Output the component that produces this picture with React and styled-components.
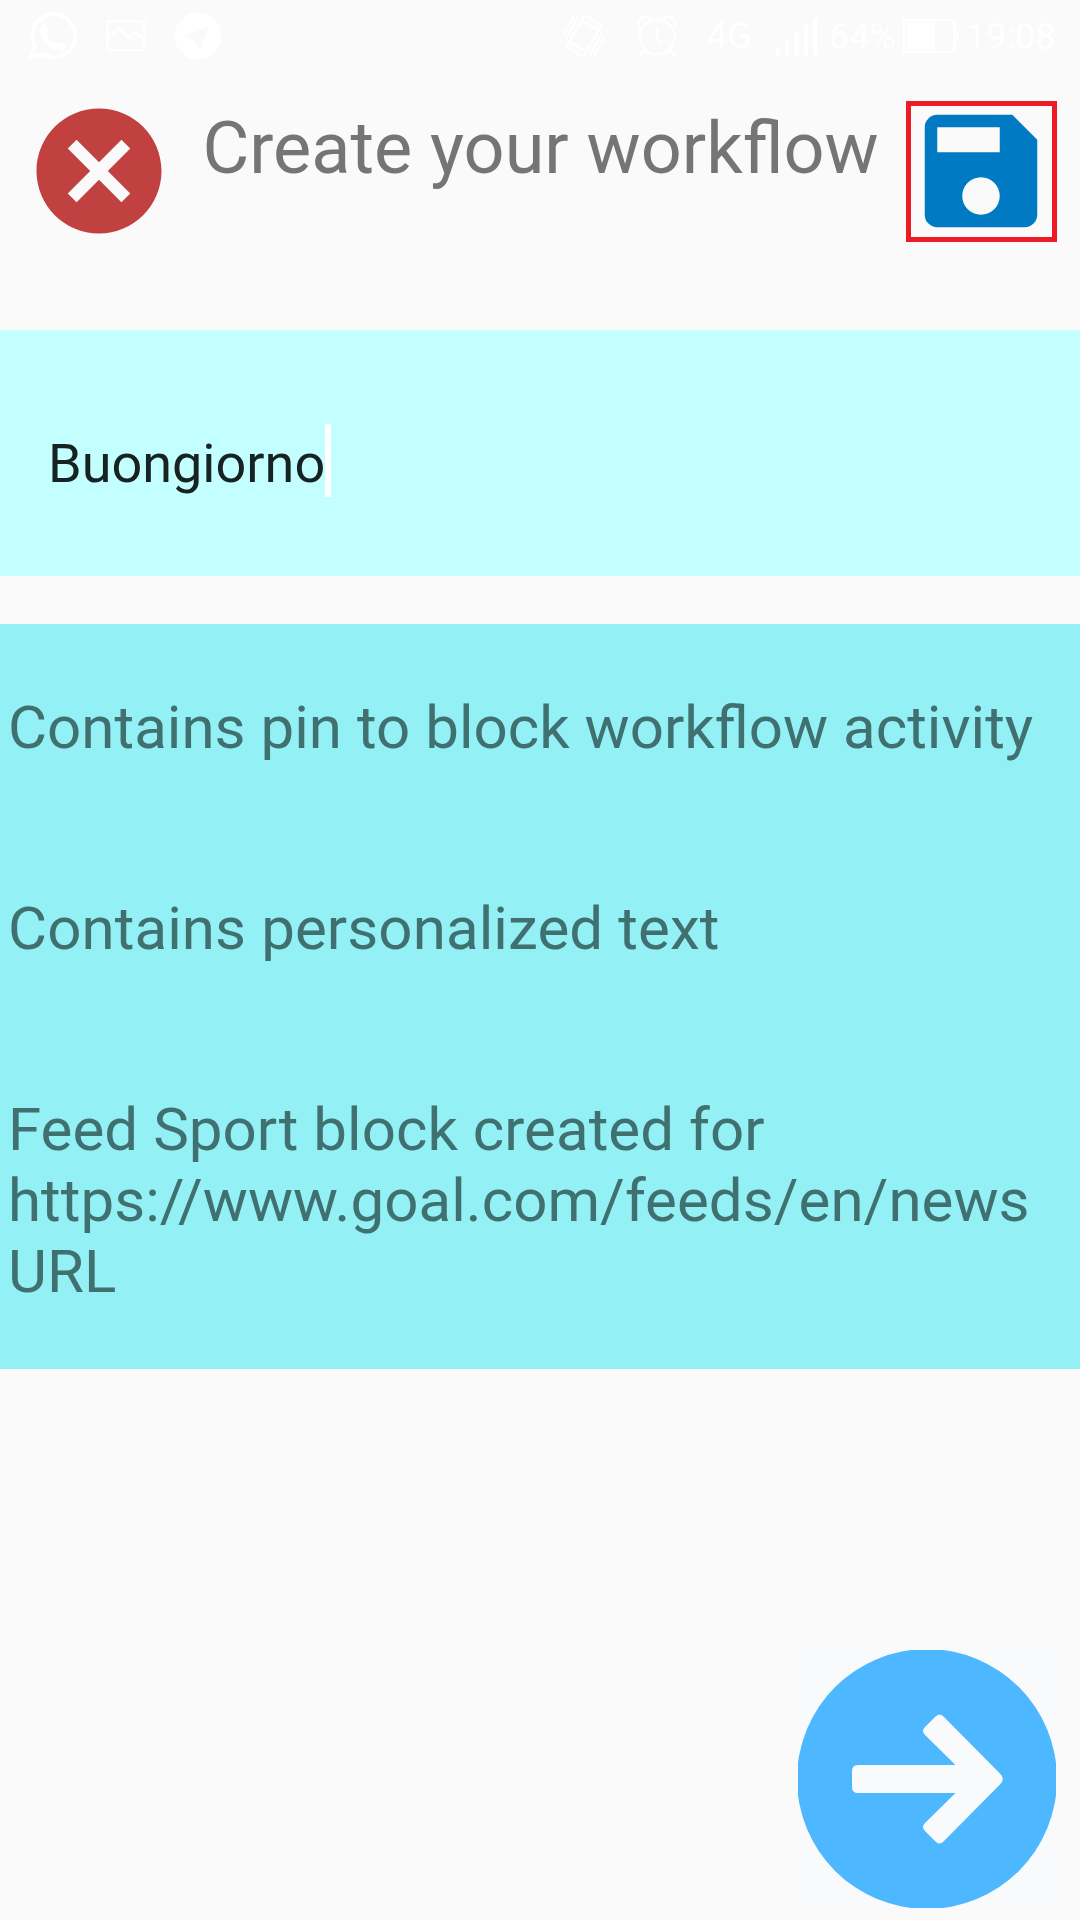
import React from "react";
import styled, { createGlobalStyle } from "styled-components";
import { MdCancel, MdSave } from "react-icons/md";

const GlobalStyle = createGlobalStyle`
  * { box-sizing: border-box; }
  body { margin: 0; background: #fafafa; }
`;

const Screen = styled.div`
  width: 1080px;
  height: 1920px;
  display: flex;
  flex-direction: column;
  overflow: hidden;
  background: #fafafa;
  font-family: Roboto, "Noto Sans", sans-serif;
`;

const StatusBar = styled.div`
  height: 72px;
  padding: 0 25px 0 28px;
  display: flex;
  justify-content: space-between;
  color: #fff;
`;

const StatusGroup = styled.div`
  display: flex;
  align-items: center;
`;

const StatusIcon = styled.svg`
  display: block;
  flex: none;
  margin-right: ${(p) => p.$gap || 0}px;
`;

const StatusText = styled.span`
  width: ${(p) => p.$width}px;
  font-size: ${(p) => p.$size}px;
  line-height: 72px;
  padding-top: ${(p) => p.$drop || 0}px;
  margin-right: ${(p) => p.$gap || 0}px;
  white-space: nowrap;
`;

const Header = styled.header`
  height: 258px;
  padding: 24px 23px 0 24px;
  display: flex;
  align-items: flex-start;
`;

const IconButton = styled.button`
  width: 150px;
  height: 150px;
  padding: 0;
  border: 0;
  background: none;
  flex: none;
  color: ${(p) => p.$color};
  svg { display: block; width: 150px; height: 150px; }
`;

const SaveFrame = styled.div`
  width: 151px;
  height: 141px;
  margin-top: 5px;
  padding: 0 1px 1px 0;
  border: 5px solid #ed1c24;
  display: flex;
  align-items: center;
  justify-content: center;
  flex: none;
`;

const Title = styled.h1`
  flex: 1;
  margin: 0;
  padding: 11px 0 0 28.5px;
  font-size: 72px;
  font-weight: 400;
  line-height: 84px;
  color: #757575;
  white-space: nowrap;
`;

const NameField = styled.div`
  height: 246px;
  padding: 94px 48px 0;
  display: flex;
  align-items: flex-start;
  background: #c4ffff;
`;

const NameText = styled.span`
  font-size: 54px;
  line-height: 80px;
  color: #172222;
`;

const Caret = styled.span`
  width: 6px;
  height: 73px;
  background: #fff;
`;

const BlockList = styled.ul`
  list-style: none;
  margin: 48px 0 0;
  height: 745px;
  padding: 68px 8px 0 8px;
  display: flex;
  flex-direction: column;
  gap: 130px;
  background: #93f0f4;
`;

const BlockItem = styled.li`
  font-size: 60px;
  line-height: 71px;
  letter-spacing: ${(p) => p.$tracking}px;
  font-feature-settings: "liga" 1;
  color: #407070;
`;

const Footer = styled.footer`
  flex: 1;
  padding: 0 24px 12px;
  display: flex;
  align-items: flex-end;
  justify-content: flex-end;
`;

const NextButton = styled.button`
  width: 258px;
  height: 258px;
  padding: 0;
  border: 0;
  background: #f9fafb;
  svg { display: block; }
`;

const blocks = [
  { text: "Contains pin to block workflow activity", tracking: 0.03 },
  { text: "Contains personalized text", tracking: 0.1 },
  { text: "Feed Sport block created for https://www.goal.com/feeds/en/news URL", tracking: 0.05 },
];

function WhatsAppIcon() {
  return (
    <StatusIcon $gap={28} width="50" height="50" viewBox="0 0 50 50">
      <path d="M3.5 46.5 7 35A21.5 21.5 0 1 1 15 43.2Z" fill="none" stroke="#fff" strokeWidth="4" />
      <path d="M14 14c2-2 4-2 5 0l2 5c.5 2-2 3-2 5 2 4 5 7 9 9 2 0 3-3 5-2l4 2c2 1 1 4-1 6-3 2-8 1-13-2-5-4-9-9-11-14-1-4 0-7 2-9Z" fill="#fff" />
    </StatusIcon>
  );
}

function PictureIcon() {
  return (
    <StatusIcon $gap={28} width="40" height="32" viewBox="0 0 40 32">
      <rect x="1.5" y="1.5" width="37" height="28.5" rx="2" fill="none" stroke="#fff" strokeWidth="2.5" />
      <path d="M2 17 13 8l10 10 6-6 10 8" fill="none" stroke="#fff" strokeWidth="2.5" />
    </StatusIcon>
  );
}

function TelegramIcon() {
  return (
    <StatusIcon width="48" height="48" viewBox="0 0 48 48">
      <circle cx="24" cy="24" r="23.5" fill="#fff" />
      <path d="M10 23.5 35 14.5 26 38l-7-10Z" fill="#fafafa" />
    </StatusIcon>
  );
}

function VibrateIcon() {
  return (
    <StatusIcon $gap={27} width="50" height="50" viewBox="0 0 50 50">
      <g transform="rotate(30 25 25)" fill="none" stroke="#fff" strokeWidth="2.5">
        <rect x="15" y="7" width="20" height="36" rx="2" />
        <path d="M15 13h20M15 37h20M10.5 11v26M6.500 13v22M39.500 13v26M43.500 15v22" />
      </g>
    </StatusIcon>
  );
}

function AlarmIcon() {
  return (
    <StatusIcon $gap={29} width="42" height="44" viewBox="0 0 42 44">
      <g fill="none" stroke="#fff" strokeWidth="2.5">
        <circle cx="21" cy="23" r="17.5" />
        <path d="M21 13v11l6 5M8 37l-5 5M34 37l5 5M4 14C-1 7 9-2 15 5M38 14C43 7 33-2 27 5" />
      </g>
    </StatusIcon>
  );
}

function SignalIcon() {
  return (
    <StatusIcon $gap={11} width="42" height="38" viewBox="0 0 42 38">
      <path d="M0 31h4v7H0zM9 24h4v14H9zM18.500 16h4v22h-4zM28 8h4v30h-4zM37 1h4v37h-4z" fill="#fff" />
    </StatusIcon>
  );
}

function BatteryIcon() {
  return (
    <StatusIcon $gap={7} width="56" height="34" viewBox="0 0 56 34">
      <rect x="1.25" y="1.25" width="50" height="31.5" fill="none" stroke="#fff" strokeWidth="2.5" />
      <path d="M4 4h28v26H4zM53 11h2.500v12H53z" fill="#fff" />
    </StatusIcon>
  );
}

function ArrowCircle() {
  return (
    <svg width="258" height="258" viewBox="0 0 258 258">
      <circle cx="129" cy="129" r="130" fill="#4db7ff" />
      <path
        d="M60 115H157.5L127 85Q123 81 127 77L137 67Q141.500 62 146 67L202 123.500Q207.500 129 202 134.500L146 191Q141.500 196 137 191L127 181Q123 177 127 173L157.500 143H60Q54 143 54 137V121Q54 115 60 115Z"
        fill="#f8fafc"
      />
    </svg>
  );
}

export default function App() {
  return (
    <>
      <GlobalStyle />
      <Screen>
        <StatusBar>
          <StatusGroup>
            <WhatsAppIcon />
            <PictureIcon />
            <TelegramIcon />
          </StatusGroup>
          <StatusGroup>
            <VibrateIcon />
            <AlarmIcon />
            <StatusText $width={46} $size={36} $gap={23}>4G</StatusText>
            <SignalIcon />
            <StatusText $width={66} $size={36} $gap={8} $drop={2}>64%</StatusText>
            <BatteryIcon />
            <StatusText $width={89} $size={36} $drop={2}>19:08</StatusText>
          </StatusGroup>
        </StatusBar>
        <Header>
          <IconButton $color="#c14140" aria-label="Cancel">
            <MdCancel />
          </IconButton>
          <Title>Create your workflow</Title>
          <SaveFrame>
            <IconButton $color="#007ac2" aria-label="Save">
              <MdSave />
            </IconButton>
          </SaveFrame>
        </Header>
        <NameField>
          <NameText>Buongiorno</NameText>
          <Caret />
        </NameField>
        <BlockList>
          {blocks.map(({ text, tracking }) => (
            <BlockItem key={text} $tracking={tracking}>{text}</BlockItem>
          ))}
        </BlockList>
        <Footer>
          <NextButton aria-label="Next">
            <ArrowCircle />
          </NextButton>
        </Footer>
      </Screen>
    </>
  );
}
